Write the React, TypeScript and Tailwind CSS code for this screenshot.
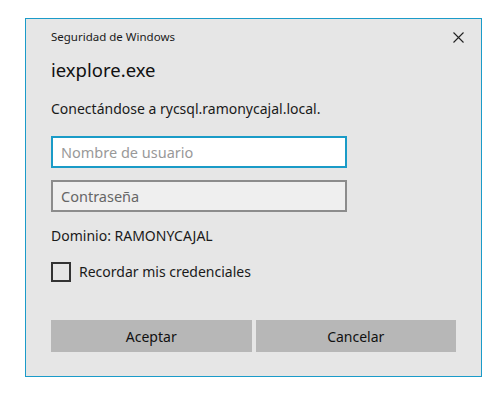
import React, { useState } from "react";

const App = () => {
  const [remember, setRemember] = useState(false);

  return (
    <div
      className="w-[504px] h-[400px] bg-white pt-[18px] pl-[25px]"
      style={{ fontFamily: '"Segoe UI", "Noto Sans", "Open Sans", sans-serif' }}
    >
      <div className="w-[457px] h-[359px] bg-[#e6e6e6] border border-[#1b9bc9] flex flex-col px-[25px] text-[#1a1a1a]">
        {/* Header */}
        <div className="flex items-center justify-between h-[34px] pt-[2px]">
          <span className="text-[11.5px] text-[#1a1a1a]">Seguridad de Windows</span>
          <button className="w-[16px] h-[16px] flex items-center justify-center mr-[-10px]">
            <svg width="11" height="11" viewBox="0 0 11 11">
              <path d="M0.5 0.5 L10.5 10.5 M10.5 0.5 L0.5 10.5" stroke="#222" strokeWidth="1.1" />
            </svg>
          </button>
        </div>

        <h1 className="text-[18.5px] leading-[26px] mt-[4px] text-[#111]">iexplore.exe</h1>

        <p className="text-[14px] leading-[20px] mt-[16px]">
          Conectándose a rycsql.ramonycajal.local.
        </p>

        {/* Inputs */}
        <input
          autoFocus
          placeholder="Nombre de usuario"
          className="mt-[17px] w-[296px] h-[32px] bg-white border-2 border-[#1a9bc7] px-[8px] text-[14.5px] outline-none placeholder:text-[#999]"
        />
        <input
          type="password"
          placeholder="Contraseña"
          className="mt-[12px] w-[296px] h-[32px] bg-[#efefef] border-2 border-[#8c8c8c] px-[8px] text-[14.5px] outline-none placeholder:text-[#666]"
        />

        <p className="text-[14px] leading-[20px] mt-[14px]">Dominio: RAMONYCAJAL</p>

        <label className="flex items-center gap-[8px] mt-[16px] cursor-pointer">
          <span
            onClick={() => setRemember(!remember)}
            className="w-[20px] h-[20px] border-2 border-[#333] bg-transparent flex items-center justify-center"
          >
            {remember && <span className="text-[12px]">✓</span>}
          </span>
          <span className="text-[14px] leading-[20px]">Recordar mis credenciales</span>
        </label>

        {/* Footer */}
        <div className="flex gap-[4px] mt-[38px]">
          <button className="w-[201px] h-[32px] bg-[#b7b7b7] text-[14px] text-[#111]">Aceptar</button>
          <button className="w-[201px] h-[32px] bg-[#b7b7b7] text-[14px] text-[#111]">Cancelar</button>
        </div>
      </div>
    </div>
  );
};

export default App;
